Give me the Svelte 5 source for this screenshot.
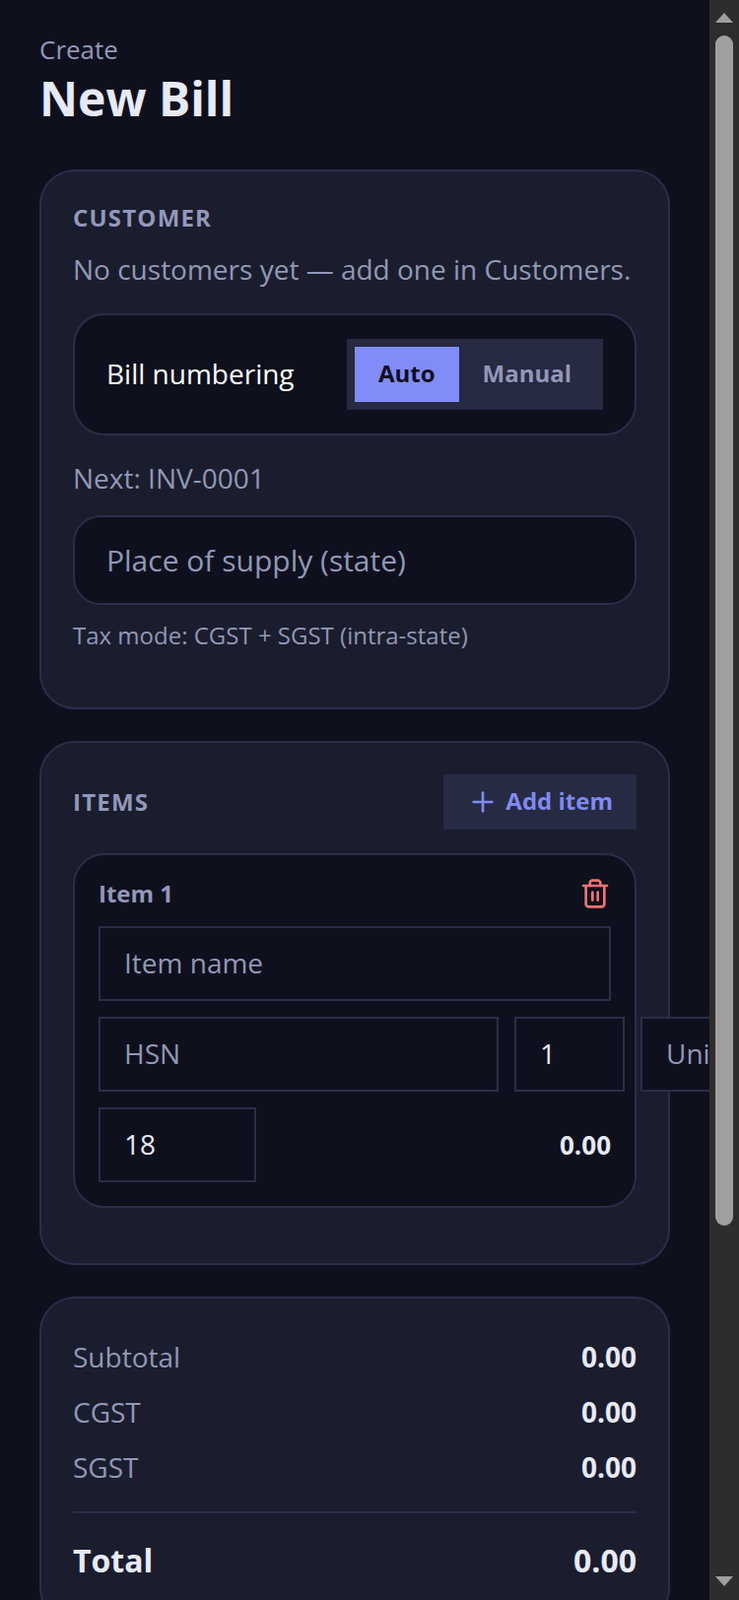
<script>
  let placeOfSupply = $state('');
  let numbering = $state('auto');
  let items = $state([{ name: '', hsn: '', qty: 1, unit: '', tax: 18 }]);
</script>

<div class="shell">
  <main>
    <header>
      <p class="eyebrow">Create</p>
      <h1>New Bill</h1>
    </header>

    <section class="card">
      <h2 class="label">CUSTOMER</h2>
      <p class="hint">No customers yet — add one in Customers.</p>

      <div class="numbering">
        <span>Bill numbering</span>
        <div class="toggle">
          <button class:active={numbering === 'auto'} onclick={() => numbering = 'auto'}>Auto</button>
          <button class:active={numbering === 'manual'} onclick={() => numbering = 'manual'}>Manual</button>
        </div>
      </div>

      <p class="next">Next: INV-0001</p>
      <input class="field" bind:value={placeOfSupply} placeholder="Place of supply (state)" />
      <p class="taxmode">Tax mode: CGST + SGST (intra-state)</p>
    </section>

    <section class="card">
      <div class="items-head">
        <h2 class="label">ITEMS</h2>
        <button class="add">
          <svg width="32" height="32" viewBox="0 0 24 24" fill="none" stroke="currentColor" stroke-width="2" stroke-linecap="round" stroke-linejoin="round">
            <path d="M5 12h14" />
            <path d="M12 5v14" />
          </svg>
          <span>Add item</span>
        </button>
      </div>

      {#each items as item, i}
        <div class="item">
          <div class="item-top">
            <span class="item-title">Item {i + 1}</span>
            <button class="trash" aria-label="Remove item">
              <svg width="32" height="32" viewBox="0 0 24 24" fill="none" stroke="currentColor" stroke-width="2" stroke-linecap="round" stroke-linejoin="round">
                <path d="M3 6h18" />
                <path d="M19 6v14c0 1-1 2-2 2H7c-1 0-2-1-2-2V6" />
                <path d="M8 6V4c0-1 1-2 2-2h4c1 0 2 1 2 2v2" />
                <path d="M10 11v6" />
                <path d="M14 11v6" />
              </svg>
            </button>
          </div>
          <input class="small wide" bind:value={item.name} placeholder="Item name" />
          <div class="row">
            <input class="small hsn" bind:value={item.hsn} placeholder="HSN" />
            <input class="small qty" bind:value={item.qty} />
            <input class="small unit" bind:value={item.unit} placeholder="Unit" />
          </div>
          <div class="row">
            <input class="small tax" bind:value={item.tax} />
            <span class="amount">0.00</span>
          </div>
        </div>
      {/each}
    </section>

    <section class="card totals">
      <div class="line"><span>Subtotal</span><b>0.00</b></div>
      <div class="line"><span>CGST</span><b>0.00</b></div>
      <div class="line"><span>SGST</span><b>0.00</b></div>
      <div class="line total"><span>Total</span><b>0.00</b></div>
    </section>
  </main>

  <!-- the window's scrollbar -->
  <div class="scrollbar" aria-hidden="true">
    <svg class="arrow up" width="18" height="10" viewBox="0 0 18 10"><path d="M9 0l9 10H0z" /></svg>
    <div class="thumb"></div>
    <svg class="arrow down" width="18" height="10" viewBox="0 0 18 10"><path d="M0 0h18L9 10z" /></svg>
  </div>
</div>

<style>
  :global(body) {
    font-family: 'Open Sans', sans-serif;
    background: #0e101e;
    color: #e8eaf6;
  }

  * { box-sizing: border-box; margin: 0; padding: 0; }

  .shell {
    display: flex;
    height: 100vh;
    overflow: hidden;
  }

  main {
    flex: 1;
    min-width: 0;
    overflow-x: hidden;
    overflow-y: auto;
    padding: 32px 40px;
    display: flex;
    flex-direction: column;
    gap: 32px;
  }

  main > * { flex-shrink: 0; }

  .scrollbar {
    flex: 0 0 30px;
    display: flex;
    flex-direction: column;
    align-items: center;
    background: #2d2d2d;
  }

  .arrow { fill: #9f9f9f; }
  .up { margin-top: 13px; }
  .down { margin-top: auto; margin-bottom: 14px; }

  .thumb {
    width: 18px;
    height: 1208px;
    margin-top: 13px;
    background: #9f9f9f;
    border-radius: 9px;
  }

  header { margin-bottom: 8px; }

  .eyebrow {
    font-size: 26px;
    line-height: 36px;
    color: #9298b4;
  }

  h1 {
    font-size: 48px;
    line-height: 64px;
    font-weight: 700;
    color: #e8eaf6;
  }

  .card {
    background: #1a1d2e;
    border: 2px solid #2a2e48;
    border-radius: 36px;
    padding: 32px;
  }

  .label {
    font-size: 24px;
    line-height: 30px;
    font-weight: 700;
    letter-spacing: 1.2px;
    color: #9298b8;
  }

  .hint {
    margin-top: 18px;
    font-size: 28px;
    line-height: 38px;
    color: #9298b4;
  }

  .numbering {
    margin-top: 26px;
    display: flex;
    align-items: center;
    justify-content: space-between;
    padding: 24px 32px;
    background: #0e101e;
    border: 2px solid #2a2e48;
    border-radius: 32px;
    font-size: 28px;
    color: #fff;
  }

  .numbering > span { padding-bottom: 2px; }

  .toggle {
    display: flex;
    padding: 8px;
    background: #262a42;
  }

  button {
    font-family: inherit;
    border: none;
    background: none;
    cursor: pointer;
  }

  .toggle button {
    height: 56px;
    padding: 0 24px 3px;
    font-size: 24px;
    font-weight: 700;
    color: #9298b8;
  }

  .toggle button.active {
    background: #818cf8;
    color: #0e101e;
  }

  .next {
    margin-top: 24px;
    font-size: 28px;
    line-height: 38px;
    color: #9298b4;
  }

  input {
    display: block;
    font-family: inherit;
    background: #0e101e;
    border: 2px solid #2a2e48;
    color: #e8eaf6;
    outline: none;
  }

  input::placeholder {
    color: #9298b4;
    opacity: 1;
  }

  .field {
    margin-top: 19px;
    width: 100%;
    height: 91px;
    padding: 0 32px;
    font-size: 30px;
    border-radius: 28px;
  }

  .taxmode {
    margin-top: 14px;
    margin-bottom: 24px;
    font-size: 24px;
    line-height: 34px;
    color: #9298b4;
  }

  .items-head {
    display: flex;
    align-items: center;
    justify-content: space-between;
  }

  .add {
    display: flex;
    align-items: center;
    gap: 7px;
    height: 56px;
    padding: 0 24px;
    background: #262a42;
    color: #7f8af0;
    font-size: 24px;
    font-weight: 700;
  }

  .add span { padding-bottom: 4px; }

  .item {
    margin-top: 24px;
    margin-bottom: 24px;
    padding: 20px 24px 24px;
    background: #0e101e;
    border: 2px solid #2a2e48;
    border-radius: 32px;
  }

  .item-top {
    display: flex;
    align-items: center;
    justify-content: space-between;
    height: 36px;
    margin-bottom: 16px;
  }

  .item-title {
    font-size: 24px;
    font-weight: 700;
    color: #9298b8;
  }

  .trash {
    display: flex;
    color: #f07272;
    margin-top: 2px;
  }

  .small {
    height: 76px;
    padding: 0 24px 2px;
    font-size: 28px;
  }

  .wide { width: 100%; }

  .row {
    margin-top: 16px;
    display: flex;
    align-items: center;
    gap: 16px;
  }

  .hsn { flex: 0 0 406px; width: 406px; }
  .qty { flex: 0 0 112px; width: 112px; }
  .unit { flex: 0 0 160px; width: 160px; }
  .tax { flex: 0 0 160px; width: 160px; }

  .amount {
    margin-left: auto;
    font-size: 26px;
    font-weight: 700;
    color: #e8eaf6;
  }

  .totals { padding-top: 31px; }

  .line {
    display: flex;
    align-items: center;
    justify-content: space-between;
    height: 56px;
    font-size: 28px;
    color: #9298b4;
  }

  .line b {
    font-weight: 700;
    color: #e8eaf6;
  }

  .total {
    margin-top: 17px;
    padding-top: 17px;
    height: 80px;
    border-top: 2px solid #2a2e48;
    font-size: 32px;
    font-weight: 700;
    color: #e8eaf6;
  }
</style>
